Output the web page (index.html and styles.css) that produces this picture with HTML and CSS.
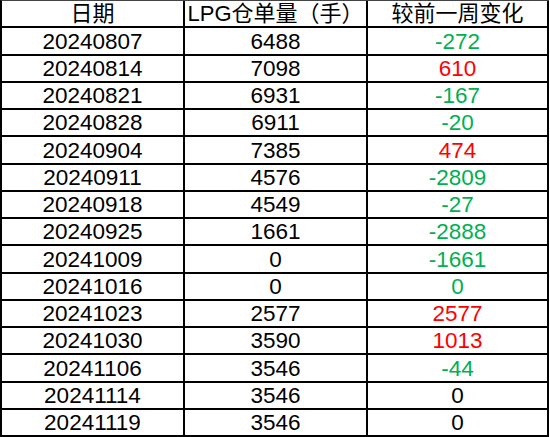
FILE: index.html
```html
<!DOCTYPE html>
<html>
<head>
<meta charset="utf-8">
<link rel="stylesheet" href="styles.css">
</head>
<body>
<div class="sheet">
  <div class="cell head">日期</div><div class="cell head">LPG仓单量（手）</div><div class="cell head">较前一周变化</div>
  <div class="cell">20240807</div><div class="cell">6488</div><div class="cell down">-272</div>
  <div class="cell">20240814</div><div class="cell">7098</div><div class="cell up">610</div>
  <div class="cell">20240821</div><div class="cell">6931</div><div class="cell down">-167</div>
  <div class="cell">20240828</div><div class="cell">6911</div><div class="cell down">-20</div>
  <div class="cell">20240904</div><div class="cell">7385</div><div class="cell up">474</div>
  <div class="cell">20240911</div><div class="cell">4576</div><div class="cell down">-2809</div>
  <div class="cell">20240918</div><div class="cell">4549</div><div class="cell down">-27</div>
  <div class="cell">20240925</div><div class="cell">1661</div><div class="cell down">-2888</div>
  <div class="cell">20241009</div><div class="cell">0</div><div class="cell down">-1661</div>
  <div class="cell">20241016</div><div class="cell">0</div><div class="cell down">0</div>
  <div class="cell">20241023</div><div class="cell">2577</div><div class="cell up">2577</div>
  <div class="cell">20241030</div><div class="cell">3590</div><div class="cell up">1013</div>
  <div class="cell">20241106</div><div class="cell">3546</div><div class="cell down">-44</div>
  <div class="cell">20241114</div><div class="cell">3546</div><div class="cell">0</div>
  <div class="cell">20241119</div><div class="cell">3546</div><div class="cell">0</div>
</div>
</body>
</html>
```
FILE: styles.css
```css
html, body {
  margin: 0;
  padding: 0;
  background: #fff;
}
.sheet {
  width: 549px;
  box-sizing: border-box;
  display: grid;
  grid-template-columns: 183px 183px 181px;
  grid-auto-rows: 27.25px;
  border-left: 2px solid #000;
  border-top: 1px solid #444;
  font-family: "Liberation Sans", "Noto Sans CJK SC", sans-serif;
  font-size: 22.5px;
  color: #000;
}
.cell {
  box-sizing: border-box;
  border-right: 2px solid #000;
  border-bottom: 2px solid #000;
  display: flex;
  align-items: center;
  justify-content: center;
  line-height: 1;
  padding-top: 2px;
}
.head {
  padding-top: 0;
  font-size: 22px;
}
.down { color: #00b050; }
.up { color: #ff0000; }
```
